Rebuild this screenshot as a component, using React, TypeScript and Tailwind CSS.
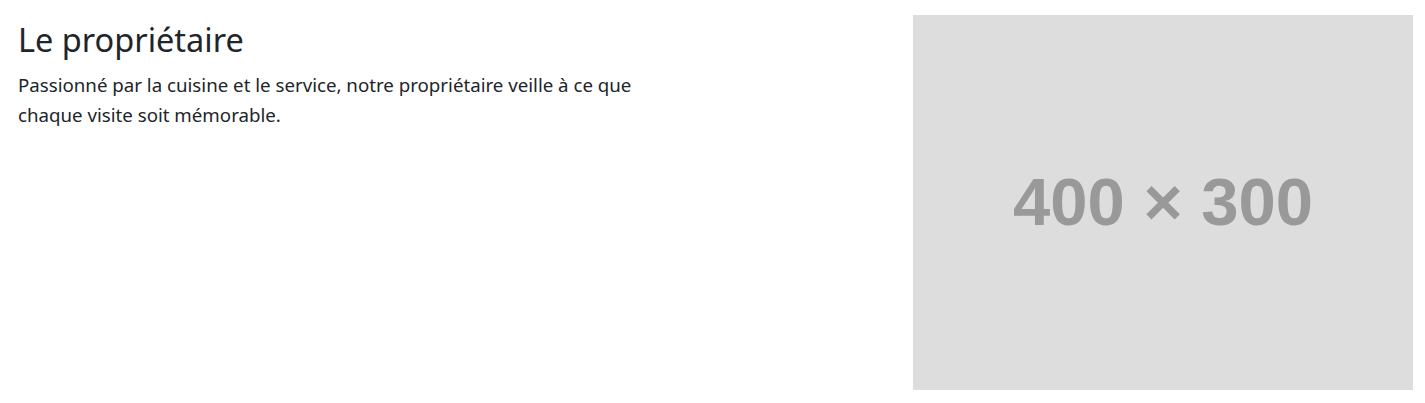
export default function App() {
  return (
    <div className="w-[1425px] h-[403px] bg-white flex justify-between pl-[18px] pr-[12px] pt-[15px]" style={{ fontFamily: '"Noto Sans", "Open Sans", sans-serif' }}>
      <div className="w-[640px] text-[#212529]">
        <h2 className="text-[32.5px] leading-[1.2] mt-[5px] mb-[11px] font-normal">Le propriétaire</h2>
        <p className="text-[18.7px] leading-[30px]">
          Passionné par la cuisine et le service, notre propriétaire veille à ce que chaque visite soit mémorable.
        </p>
      </div>
      <div className="w-[500px] h-[375px] bg-[#dddddd] flex items-center justify-center shrink-0">
        <span className="text-[67px] font-bold text-[#999999]" style={{ fontFamily: '"Liberation Sans", Arial, sans-serif' }}>
          400 × 300
        </span>
      </div>
    </div>
  );
}
